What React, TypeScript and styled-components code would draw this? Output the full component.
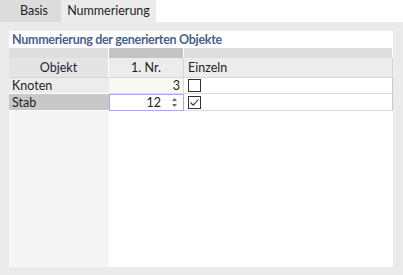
import * as React from 'react'
import styled, { createGlobalStyle } from 'styled-components'

const Global = createGlobalStyle`
  html, body {
    margin: 0;
    padding: 0;
    background: #ffffff;
    overflow: hidden;
  }
  body {
    font-family: Lato, 'Noto Sans', sans-serif;
    font-size: 12.5px;
    color: #1e1e1e;
  }
`

const Window = styled.div`
  display: flex;
  flex-direction: column;
  height: 275px;
  width: 403px;
`

const TabBar = styled.div`
  background: #ffffff;
  display: flex;
  flex: none;
  height: 22px;
`

const Tab = styled.div<{ $active?: boolean }>`
  align-items: center;
  background: ${p => (p.$active ? '#ebebeb' : '#dcdcdc')};
  box-sizing: border-box;
  display: flex;
  justify-content: center;
  padding: ${p => (p.$active ? '0 0 1px 0' : '0 0 1px 7px')};
  width: ${p => (p.$active ? '95px' : '61px')};
`

const Panel = styled.div`
  background: #ebebeb;
  display: flex;
  flex: 1;
  padding: 9px 10px 8px 9px;
`

const GroupBox = styled.div`
  background: #ffffff;
  display: flex;
  flex: 1;
  flex-direction: column;
`

const GroupTitle = styled.div`
  color: #4a5f8c;
  flex: none;
  font-weight: 700;
  height: 17px;
  letter-spacing: -0.3px;
  line-height: 17px;
  padding-left: 3px;
`

const Table = styled.div`
  display: grid;
  flex: 1;
  grid-template-columns: 100px 75px 1fr;
  grid-template-rows: 10px 20px 16px 17px 1fr;
`

const Band = styled.div<{ $dark?: boolean }>`
  background: ${p => (p.$dark ? '#c4c4c4' : '#dedede')};
  border-right: 1px solid #ffffff;
  &:last-of-type {
    border-right: none;
  }
`

const HeadCell = styled.div<{ $align?: string }>`
  align-items: center;
  background: #ececec;
  border-bottom: 1px solid #d6d6d6;
  border-right: 1px solid #d6d6d6;
  display: flex;
  justify-content: ${p => p.$align || 'center'};
  padding-left: ${p => (p.$align === 'flex-start' ? '4px' : '0')};
`

const HeadCellFirst = styled(HeadCell)`
  background: #e4e4e4;
  border-right: 1px solid #ffffff;
  color: #1c1c3c;
`

const RowLabel = styled.div<{ $selected?: boolean }>`
  align-items: center;
  background: ${p => (p.$selected ? '#c8c8c8' : '#ececec')};
  border-bottom: 1px solid #ffffff;
  display: flex;
  padding-left: 3px;
`

const NumberCell = styled.div`
  align-items: center;
  background: #f9f9f1;
  border-bottom: 1px solid #dcdcdc;
  border-right: 1px solid #dcdcdc;
  display: flex;
  justify-content: flex-end;
  padding-right: 3px;
`

const EditCell = styled.div`
  align-items: center;
  background: #ffffff;
  border: 1px solid #a9a9ec;
  display: flex;
  justify-content: flex-end;
  padding-right: 3px;
`

const Spin = styled.span`
  display: flex;
  margin-left: 10px;
  margin-right: 2px;
`

const CheckCell = styled.div`
  align-items: center;
  border-bottom: 1px solid #dcdcdc;
  border-right: 1px solid #c8c8c8;
  display: flex;
  padding-left: 4px;
`

const Box = styled.span`
  border: 1px solid #333333;
  box-sizing: border-box;
  display: flex;
  height: 13px;
  width: 13px;
`

const Filler = styled.div<{ $side?: boolean }>`
  background: ${p => (p.$side ? '#f5f5f5' : '#ffffff')};
`

const Check = ({ on }: { on?: boolean }) => (
  <Box>
    {on && (
      <svg width="11" height="11" viewBox="0 0 11 11">
        <path d="M1.5 5.5 L4.2 8.2 L9.5 2.5" fill="none" stroke="#333" strokeWidth="1.1" />
      </svg>
    )}
  </Box>
)

const SpinArrows = () => (
  <Spin>
    <svg width="7" height="11" viewBox="0 0 7 11">
      <path d="M3.5 1 L6 4 L1 4 Z" fill="#6a6a6a" />
      <path d="M3.5 10 L6 7 L1 7 Z" fill="#6a6a6a" />
    </svg>
  </Spin>
)

export default () => (
  <Window>
    <Global />
    <TabBar>
      <Tab>Basis</Tab>
      <Tab $active>Nummerierung</Tab>
    </TabBar>
    <Panel>
      <GroupBox>
        <GroupTitle>Nummerierung der generierten Objekte</GroupTitle>
        <Table>
          <Band />
          <Band $dark />
          <Band />

          <HeadCellFirst>Objekt</HeadCellFirst>
          <HeadCell>1. Nr.</HeadCell>
          <HeadCell $align="flex-start">Einzeln</HeadCell>

          <RowLabel>Knoten</RowLabel>
          <NumberCell>3</NumberCell>
          <CheckCell><Check /></CheckCell>

          <RowLabel $selected>Stab</RowLabel>
          <EditCell>12<SpinArrows /></EditCell>
          <CheckCell><Check on /></CheckCell>

          <Filler $side />
          <Filler />
          <Filler />
        </Table>
      </GroupBox>
    </Panel>
  </Window>
)
